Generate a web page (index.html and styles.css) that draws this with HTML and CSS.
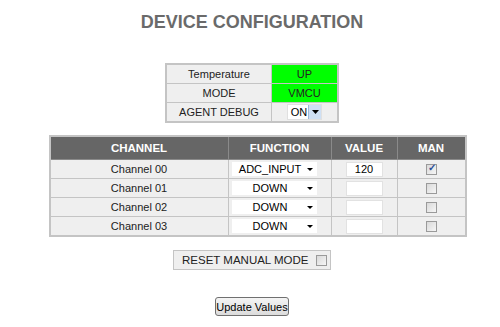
FILE: index.html
```html
<!DOCTYPE html>
<html lang="en">
<head>
  <meta charset="UTF-8">
  <title>Device Configuration</title>
  <link rel="stylesheet" href="styles.css">
</head>
<body>

  <h1>DEVICE CONFIGURATION</h1>

  <table class="estado">
    <tr>
      <td class="rotulo">Temperature</td>
      <td class="ok">UP</td>
    </tr>
    <tr>
      <td class="rotulo">MODE</td>
      <td class="ok">VMCU</td>
    </tr>
    <tr>
      <td class="rotulo">AGENT DEBUG</td>
      <td class="campo">
        <span class="mini-select">
          <span class="mini-valor">ON</span>
          <span class="mini-seta">
            <svg width="7" height="4" viewBox="0 0 7 4"><path d="M0 0h7L3.5 4z" fill="#000"/></svg>
          </span>
        </span>
      </td>
    </tr>
  </table>

  <table class="canais">
    <tr>
      <th class="c-canal">CHANNEL</th>
      <th class="c-funcao">FUNCTION</th>
      <th class="c-valor">VALUE</th>
      <th class="c-man">MAN</th>
    </tr>
    <tr>
      <td>Channel 00</td>
      <td><span class="seletor">ADC_INPUT<i class="seta"></i></span></td>
      <td><input class="valor" type="text" value="120"></td>
      <td><input class="caixa" type="checkbox" checked></td>
    </tr>
    <tr>
      <td>Channel 01</td>
      <td><span class="seletor">DOWN<i class="seta"></i></span></td>
      <td><input class="valor" type="text" value=""></td>
      <td><input class="caixa" type="checkbox"></td>
    </tr>
    <tr>
      <td>Channel 02</td>
      <td><span class="seletor">DOWN<i class="seta"></i></span></td>
      <td><input class="valor" type="text" value=""></td>
      <td><input class="caixa" type="checkbox"></td>
    </tr>
    <tr>
      <td>Channel 03</td>
      <td><span class="seletor">DOWN<i class="seta"></i></span></td>
      <td><input class="valor" type="text" value=""></td>
      <td><input class="caixa" type="checkbox"></td>
    </tr>
  </table>

  <div class="reset">
    <span>RESET MANUAL MODE</span>
    <input class="caixa" type="checkbox">
  </div>

  <button class="atualizar">Update Values</button>

</body>
</html>
```

FILE: styles.css
```css
body {
  font-family: "Liberation Sans", Arial, sans-serif;
  font-size: 11px;
  color: #222;
  background: #fff;
  margin: 0;
  padding-left: 4px;
  display: flex;
  flex-direction: column;
  align-items: center;
}

h1 {
  color: #6a6a6a;
  font-size: 18px;
  line-height: 20px;
  margin: 12px 0 0;
}

table {
  border-collapse: collapse;
  table-layout: fixed;
}

td, th {
  border: 1px solid #c4c4c4;
  text-align: center;
  padding: 0;
}

/* tabela de estado */
.estado {
  margin-top: 31px;
  width: 174px;
  border: 2px solid #c4c4c4;
}

.estado td {
  height: 18px;
}

.estado .rotulo {
  background: #efefef;
  width: 104px;
}

.estado .campo {
  background: #efefef;
}

.estado .ok {
  background: #00ff00;
}

.mini-select {
  display: inline-flex;
  align-items: stretch;
  height: 14px;
  vertical-align: middle;
  background: #fff;
  border: 1px solid #e0e0e0;
}

.mini-valor {
  padding: 0 1px 0 3px;
  line-height: 14px;
  color: #000;
}

.mini-seta {
  width: 12px;
  background: #cfe0f4;
  border-left: 1px solid #9fb8d8;
  display: flex;
  align-items: center;
  justify-content: center;
}

/* tabela de canais */
.canais {
  margin-top: 12px;
  margin-left: 11px;
  width: 418px;
  border: 2px solid #c4c4c4;
}

.canais th {
  background: #666;
  color: #fff;
  font-weight: bold;
  font-size: 11.5px;
  height: 22px;
  border-color: #8a8a8a;
}

.canais td {
  background: #efefef;
  height: 18px;
}

.c-canal { width: 177px; }
.c-funcao { width: 102px; }
.c-valor { width: 65px; }

.seletor {
  position: relative;
  display: inline-block;
  width: 85px;
  height: 14px;
  line-height: 14px;
  margin-right: 11px;
  background: #fff;
  color: #000;
  text-align: center;
  padding-right: 8px;
  box-sizing: border-box;
  vertical-align: middle;
}

.seta {
  position: absolute;
  right: 4px;
  top: 6px;
  border-left: 3px solid transparent;
  border-right: 3px solid transparent;
  border-top: 3px solid #000;
}

.valor {
  width: 37px;
  height: 15px;
  box-sizing: border-box;
  border: 1px solid #e2e2e2;
  background: #fff;
  font: inherit;
  color: #000;
  text-align: center;
  padding: 0;
  vertical-align: middle;
}

.caixa {
  appearance: none;
  -webkit-appearance: none;
  width: 11px;
  height: 11px;
  margin: 0;
  border: 1px solid #9a9a9a;
  background: linear-gradient(135deg, #d9d9d9, #f6f6f6);
  vertical-align: middle;
  position: relative;
}

.caixa:checked::after {
  content: "\2713";
  position: absolute;
  left: 1px;
  top: -3px;
  font-size: 10px;
  color: #2a4f9a;
  font-weight: bold;
}

.reset {
  margin-top: 13px;
  width: 158px;
  height: 20px;
  box-sizing: border-box;
  background: #efefef;
  border: 1px solid #c4c4c4;
  display: flex;
  align-items: center;
  justify-content: space-between;
  padding: 0 3px 0 8px;
  font-size: 11.5px;
}

.atualizar {
  margin-top: 27px;
  height: 19px;
  width: 74px;
  padding: 0;
  font: inherit;
  color: #000;
  background: linear-gradient(#f4f4f4, #dcdcdc);
  border: 1px solid #707070;
  border-radius: 3px;
}
```
